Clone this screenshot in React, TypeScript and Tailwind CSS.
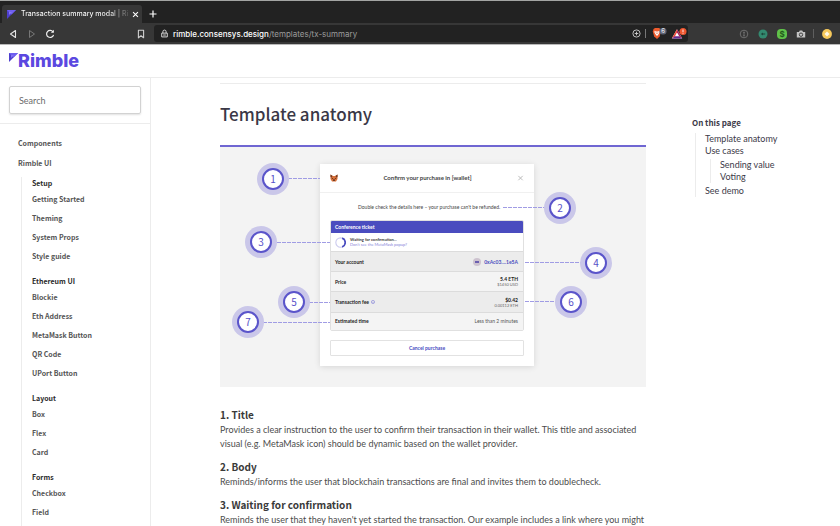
import React from "react";

type Group = { title: string; items: string[] };

const groups: Group[] = [
  { title: "Setup", items: ["Getting Started", "Theming", "System Props", "Style guide"] },
  { title: "Ethereum UI", items: ["Blockie", "Eth Address", "MetaMask Button", "QR Code", "UPort Button"] },
  { title: "Layout", items: ["Box", "Flex", "Card"] },
  { title: "Forms", items: ["Checkbox", "Field"] },
];

const sections = [
  {
    title: "1. Title",
    text: "Provides a clear instruction to the user to confirm their transaction in their wallet. This title and associated visual (e.g. MetaMask icon) should be dynamic based on the wallet provider.",
  },
  {
    title: "2. Body",
    text: "Reminds/informs the user that blockchain transactions are final and invites them to doublecheck.",
  },
  {
    title: "3. Waiting for confirmation",
    text: "Reminds the user that they haven't yet started the transaction. Our example includes a link where you might",
  },
];

// Marker centres and the two ends of each leader line, on a 426 x 240 canvas.
const markers = [
  { n: 1, x: 53, y: 32, from: 63, to: 100, lineY: 31 },
  { n: 2, x: 340, y: 61, from: 283, to: 330, lineY: 60 },
  { n: 3, x: 41, y: 95, from: 52, to: 110, lineY: 95 },
  { n: 4, x: 376, y: 116, from: 305, to: 365, lineY: 115 },
  { n: 5, x: 74, y: 155, from: 84, to: 110, lineY: 155 },
  { n: 6, x: 351, y: 155, from: 305, to: 341, lineY: 154 },
  { n: 7, x: 28, y: 175, from: 38, to: 110, lineY: 175 },
];

function RimbleMark({ className }: { className: string }) {
  return (
    <svg viewBox="0 0 18 18" className={className} aria-hidden="true">
      <path d="M0 0H18L0 18Z" fill="#4e3fce" />
      <path d="M0 0H18L9 9Z" fill="#6f5ff0" />
      <path d="M4 4H10L4 10Z" fill="#8577f5" />
    </svg>
  );
}

function BrowserChrome() {
  return (
    <div className="shrink-0 border-t border-b border-t-[#a3a5a3] border-b-[#b9b9b9] bg-[#222222] font-[Inter,sans-serif] text-white">
      <div className="flex h-[22px] items-end">
        <div className="ml-[2px] flex h-[18px] w-[140px] items-center rounded-t-[3px] bg-[#373737] pr-[3px] pl-[5px]">
          <RimbleMark className="mr-[5px] size-[9px] shrink-0" />
          <span className="min-w-0 flex-1 overflow-hidden bg-linear-to-r from-white from-80% to-[#555555] bg-clip-text text-[7px] leading-[12px] font-medium whitespace-nowrap text-transparent">
            Transaction summary modal | Ri
          </span>
          <button aria-label="Close tab" className="ml-[2px] flex size-[8px] shrink-0 items-center justify-center">
            <svg viewBox="0 0 8 8" className="size-[7px]" stroke="#fff" strokeWidth="1.2">
              <path d="M1.2 1.2L6.8 6.8M6.8 1.2L1.2 6.8" />
            </svg>
          </button>
        </div>
        <button aria-label="New tab" className="ml-[6px] flex h-[18px] w-[10px] items-center justify-center">
          <svg viewBox="0 0 8 8" className="size-[8px]" stroke="#fff" strokeWidth="1.2">
            <path d="M4 .5V7.5M.5 4H7.5" />
          </svg>
        </button>
      </div>
      <div className="flex h-[21px] items-center bg-[#373737] pl-[8px]">
        <button aria-label="Back" className="mr-[9px]">
          <svg viewBox="0 0 10 10" className="size-[10px]" fill="none" stroke="#e2e2e2" strokeWidth="1.1">
            <path d="M7.5 1.5V8.5L2.5 5Z" strokeLinejoin="round" />
          </svg>
        </button>
        <button aria-label="Forward" className="mr-[8px]">
          <svg viewBox="0 0 10 10" className="size-[10px]" fill="none" stroke="#777777" strokeWidth="1">
            <path d="M2.5 1.5V8.5L7.5 5Z" strokeLinejoin="round" />
          </svg>
        </button>
        <button aria-label="Reload" className="mr-[81px]">
          <svg viewBox="0 0 10 10" className="size-[10px]" fill="none" stroke="#f0f0f0" strokeWidth="1.2">
            <path d="M8 3A3.5 3.5 0 1 0 8.5 5.8" />
            <path d="M8.9 .8V3.8H5.9Z" fill="#f0f0f0" stroke="none" />
          </svg>
        </button>
        <button aria-label="Bookmark this page" className="mr-[8px]">
          <svg viewBox="0 0 10 10" className="size-[10px]" fill="none" stroke="#cfcfcf" strokeWidth="1.1">
            <path d="M2.4 1.3H7.6V8.8L5 6.8L2.4 8.8Z" strokeLinejoin="round" />
          </svg>
        </button>
        <div className="flex h-[17px] w-[534px] min-w-0 shrink items-center rounded-[3px] bg-[#222222] pr-[1px] pl-[6px]">
          <svg viewBox="0 0 10 10" className="mr-[4px] size-[9px]" fill="none" stroke="#d5d5d5" strokeWidth="1.1">
            <path d="M1.9 4.6H8.1V8.8H1.9ZM3.2 4.6V3A1.8 1.8 0 0 1 6.8 3V4.6M3.5 6.7H6.5" />
          </svg>
          <span className="flex-1 text-[8px] leading-[12px] font-medium whitespace-nowrap">
            rimble.consensys.design
            <span className="font-normal text-[#9b9b9b]">/templates/tx-summary</span>
          </span>
          <svg viewBox="0 0 10 10" className="mr-[4px] size-[9px]" fill="none" stroke="#d0d0d0">
            <circle cx="5" cy="5" r="4" />
            <path d="M5 3V7M3 5H7" />
          </svg>
          <span className="mr-[5px] h-[9px] w-px bg-[#777777]" />
          <svg viewBox="0 0 16 13" className="mr-[4px] h-[13px] w-[16px]" aria-label="Brave shields">
            <path d="M2.5 2L4 1H8L9.500 2L10 4.500L8.600 9.500L6 12L3.200 9.500L1.800 4.500Z" fill="#ee5b2d" />
            <path d="M3.600 3.800L5 4.400H7L8.400 3.800L8.600 5.200L7.200 7.800L6 9L4.800 7.800L3.400 5.200Z" fill="#fff" />
            <path d="M4.600 5.400L6 6.600L7.400 5.400" stroke="#ee5b2d" strokeWidth=".7" fill="none" />
            <rect x="8.500" y="1" width="7" height="6.500" rx="3" fill="#5d6376" />
            <text x="12" y="6.400" fontSize="6" textAnchor="middle" fill="#fff">6</text>
          </svg>
          <svg viewBox="0 0 16 13" className="h-[13px] w-[16px]" aria-label="Brave rewards">
            <path d="M6 2.200L11.200 11.500H.8Z" fill="#fff" />
            <path d="M6 2.200L.8 11.500L4 9.300L6 5.200Z" fill="#ee4b3a" />
            <path d="M.8 11.500H11.200L8.200 9.300H4Z" fill="#662d91" />
            <path d="M6 2.200L11.200 11.500L8.200 9.300L6 5.200Z" fill="#a3245f" />
            <circle cx="12" cy="4.500" r="3.500" fill="#f0562f" />
            <path d="M12 2.500V5.100M12 5.800V6.700" stroke="#fff" strokeWidth=".9" />
          </svg>
        </div>
        <div className="ml-auto flex items-center pr-[8px]">
          <svg viewBox="0 0 10 10" className="mr-[9px] size-[10px]" fill="none" stroke="#6e6e6e">
            <circle cx="5" cy="5" r="3.800" />
            <path d="M4 3.300H6M5 3.300V6.800M4 6.800H6" />
          </svg>
          <svg viewBox="0 0 10 10" className="mr-[9px] size-[10px]">
            <circle cx="5" cy="5" r="4.500" fill="#33896f" />
            <path d="M2.800 5L5 3.400V6.600ZM5 4.600H7.200V5.400H5Z" fill="#1d4539" />
          </svg>
          <svg viewBox="0 0 10 10" className="mr-[9px] size-[10px]">
            <rect width="10" height="10" rx="4" fill="#5fc14a" />
            <text x="5" y="8" fontSize="8" fontWeight="700" textAnchor="middle" fill="#235a1b">$</text>
          </svg>
          <svg viewBox="0 0 10 10" className="mr-[7px] size-[10px]">
            <path d="M.8 3H3L3.800 1.600H6.200L7 3H9.200V8.600H.8Z" fill="#c4c4c4" />
            <circle cx="5" cy="5.700" r="1.700" fill="none" stroke="#444444" />
          </svg>
          <span className="mr-[8px] h-[9px] w-px bg-[#5f5f5f]" />
          <svg viewBox="0 0 10 10" className="size-[10px]">
            <circle cx="5" cy="5" r="4.900" fill="#f7c95c" />
            <path d="M5 2.500L7.500 5L5 7.500L2.500 5Z" fill="#fff8e6" />
          </svg>
        </div>
      </div>
    </div>
  );
}

function Sidebar() {
  return (
    <aside className="flex w-[151px] shrink-0 flex-col border-r border-[#ececec]">
      <div className="border-b border-[#ececec] px-[9px] pt-[8px] pb-[9px]">
        <input
          type="search"
          aria-label="Search"
          placeholder="Search"
          className="block h-[28px] w-full rounded-[2px] border border-[#d2d2d2] px-[9px] font-[Lato,sans-serif] text-[9px] leading-[14px] shadow-[0_1px_2px_#0000001f] placeholder:text-[#6b6b6b]"
        />
      </div>
      <nav className="flex flex-1 flex-col pt-[9px] text-[7px] font-bold text-[#555555]">
        <a href="#components" className="block h-[20px] pl-[18px] leading-[20px]">Components</a>
        <a href="#rimble-ui" className="block h-[20px] pl-[18px] leading-[20px]">Rimble UI</a>
        <div className="mt-[4px] ml-[21px] flex flex-1 flex-col gap-[9px] border-l border-[#ececec] pl-[10px]">
          {groups.map((g) => (
            <section key={g.title}>
              <h2 className="h-[13px] leading-[13px] text-[#2b2b2b]">{g.title}</h2>
              <ul>
                {g.items.map((item) => (
                  <li key={item} className="h-[19px] leading-[19px]">
                    <a href="#item">{item}</a>
                  </li>
                ))}
              </ul>
            </section>
          ))}
        </div>
      </nav>
    </aside>
  );
}

function Fox() {
  return (
    <svg viewBox="0 0 16 16" className="size-[8px]" aria-hidden="true">
      <path d="M1 1L6 4H10L15 1V10L12 15H4L1 10Z" fill="#d9713a" />
      <path d="M1 1L5 4L3 7L1 6ZM15 1L11 4L13 7L15 6Z" fill="#6e3a22" />
      <path d="M6 11H10L9 14H7ZM3.500 7.500L6.500 9L4 10ZM12.500 7.500L9.500 9L12 10Z" fill="#3d241a" />
    </svg>
  );
}

function TransactionModal() {
  const th = "pl-[4px] text-left font-bold text-[#222222]";
  const td = "pr-[5px] text-right";
  return (
    <div className="ml-[100px] flex w-[214px] flex-col bg-white pb-[10px] font-[Lato,sans-serif] text-[5px] leading-[6px] shadow-[0_1px_6px_#0000001f]">
      <div className="flex h-[29px] items-center justify-between border-b border-[#f0f0f0] px-[10px]">
        <Fox />
        <h3 className="text-[6px] leading-[8px] font-bold text-[#444444]">Confirm your purchase in [wallet]</h3>
        <button aria-label="Close">
          <svg viewBox="0 0 8 8" className="size-[7px]" stroke="#b4b4b4">
            <path d="M1.500 1L6.500 6M6.500 1L1.500 6" />
          </svg>
        </button>
      </div>
      <p className="flex h-[27px] items-center pl-[38px] text-[#444444]">
        Double check the details here – your purchase can't be refunded.
      </p>
      <div className="mx-[10px] overflow-hidden rounded-[2px] border border-[#e0e0e0]">
        <div className="flex h-[12px] items-center bg-[#4a4cbf] pl-[4px] font-bold text-white">Conference ticket</div>
        <div className="flex h-[18px] items-center gap-[4px] pl-[4px]">
          <svg viewBox="0 0 20 20" className="size-[11px]" fill="none" strokeWidth="2">
            <circle cx="10" cy="10" r="8.500" stroke="#cccbee" />
            <path d="M13 2A8.500 8.500 0 0 1 13 18" stroke="#4a4cbf" strokeWidth="3" />
          </svg>
          <div className="text-[4px] leading-[5px]">
            <div className="font-bold text-[#333333]">Waiting for confirmation...</div>
            <a href="#popup" className="block text-[#8582d8]">Don't see the MetaMask popup?</a>
          </div>
        </div>
        <table className="w-full border-collapse">
          <tbody>
            <tr className="h-[20px] border-t border-[#dcdcdc] bg-[#ececec]">
              <th scope="row" className={th}>Your account</th>
              <td className={td}>
                <span className="inline-flex items-center gap-[3px] font-bold text-[#4a4cbf]">
                  <span className="flex size-[8px] items-center justify-center rounded-full bg-[#cdc3cf]">
                    <span className="h-[2px] w-[4px] bg-[#6b5fb0]" />
                  </span>
                  0xAc03....1e5A
                </span>
              </td>
            </tr>
            <tr className="h-[20px] border-t border-[#dcdcdc] bg-[#f4f4f4]">
              <th scope="row" className={th}>Price</th>
              <td className={td}>
                <div className="font-bold text-[#222222]">5.4 ETH</div>
                <div className="text-[4px] leading-[5px] text-[#666666]">$1450 USD</div>
              </td>
            </tr>
            <tr className="h-[21px] border-t border-[#dcdcdc] bg-[#ececec]">
              <th scope="row" className={th}>
                <span className="flex items-center gap-[2px]">
                  Transaction fee
                  <svg viewBox="0 0 8 8" className="size-[4px]" fill="none" stroke="#6d6bd0">
                    <circle cx="4" cy="4" r="3.200" />
                    <path d="M4 3.500V6" />
                  </svg>
                </span>
              </th>
              <td className={td}>
                <div className="font-bold text-[#222222]">$0.42</div>
                <div className="text-[4px] leading-[5px] text-[#666666]">0.00112 ETH</div>
              </td>
            </tr>
            <tr className="h-[17px] border-t border-[#dcdcdc] bg-[#f4f4f4]">
              <th scope="row" className={th}>Estimated time</th>
              <td className="pr-[5px] text-right text-[#555555]">Less than 2 minutes</td>
            </tr>
          </tbody>
        </table>
      </div>
      <button className="mx-[10px] mt-[9px] h-[16px] rounded-[1px] border border-[#e2e2e2] font-bold text-[#4a4cbf]">
        Cancel purchase
      </button>
    </div>
  );
}

function AnatomyFigure() {
  return (
    <figure className="border-t-2 border-[#6f66d2] bg-[#f3f3f3]">
      <div className="relative mx-auto h-[240px] w-[426px] pt-[17px]">
        <TransactionModal />
        <svg viewBox="0 0 426 240" className="absolute inset-0 h-[240px] w-[426px]" aria-hidden="true">
          {markers.map((m) => (
            <path
              key={m.n}
              d={`M${m.from} ${m.lineY + 0.5}H${m.to}`}
              stroke="#a09ce4"
              strokeWidth="1"
              strokeDasharray="4 1"
            />
          ))}
        </svg>
        {markers.map((m) => (
          <span
            key={m.n}
            className="absolute flex size-[32px] -translate-1/2 items-center justify-center rounded-full bg-[#cac7e9]"
            style={{ left: m.x, top: m.y }}
          >
            <span className="flex size-[22px] items-center justify-center rounded-full border-2 border-[#5a54ca] bg-white text-[10px] leading-[12px] text-[#5650c8]">
              {m.n}
            </span>
          </span>
        ))}
      </div>
    </figure>
  );
}

function Article() {
  return (
    <article className="min-w-0 flex-1 pt-[5px]">
      <hr className="border-[#ececec]" />
      <h1 className="mt-[17px] mb-[18px] text-[17px] leading-[26px] font-medium text-[#3a3846]">Template anatomy</h1>
      <AnatomyFigure />
      <div className="flex flex-col gap-[8px] pt-[20px]">
        {sections.map((s) => (
          <section key={s.title}>
            <h2 className="text-[10px] leading-[16px] font-bold text-[#3a3a3a]">{s.title}</h2>
            <p className="font-[Lato,sans-serif] text-[9px] leading-[14px] text-[#4c4c4c]">{s.text}</p>
          </section>
        ))}
      </div>
    </article>
  );
}

function PageContents() {
  return (
    <nav aria-label="On this page" className="w-[148px] shrink-0 pt-[38px] font-[Lato,sans-serif] text-[9px] leading-[12px] text-[#3c3a48]">
      <h2 className="font-['Noto_Sans_CJK_SC','Noto_Sans',sans-serif] text-[8px] leading-[14px] font-bold">On this page</h2>
      <ul className="mt-[3px] ml-[3px] border-l border-[#ececec] pl-[9px]">
        <li><a href="#anatomy">Template anatomy</a></li>
        <li><a href="#cases">Use cases</a></li>
        <li>
          <ul className="my-[2px] ml-[5px] border-l border-[#ececec] pl-[9px]">
            <li><a href="#sending">Sending value</a></li>
            <li><a href="#voting">Voting</a></li>
          </ul>
        </li>
        <li><a href="#demo">See demo</a></li>
      </ul>
    </nav>
  );
}

export default function App() {
  return (
    <div className="flex h-screen flex-col overflow-hidden bg-white font-['Noto_Sans_CJK_SC','Noto_Sans',sans-serif]">
      <BrowserChrome />
      <header className="flex h-[33px] shrink-0 items-center border-b border-[#ececec] pl-[9px]">
        <a href="#home" className="flex items-center font-[Inter,sans-serif] text-[18px] leading-[22px] font-extrabold text-[#5b48e0]">
          <RimbleMark className="mt-[3px] size-[9px] self-start" />
          Rimble
        </a>
      </header>
      <div className="flex min-h-0 flex-1 overflow-hidden">
        <Sidebar />
        <main className="flex min-w-0 flex-1 gap-[46px] pl-[69px]">
          <Article />
          <PageContents />
        </main>
      </div>
    </div>
  );
}
